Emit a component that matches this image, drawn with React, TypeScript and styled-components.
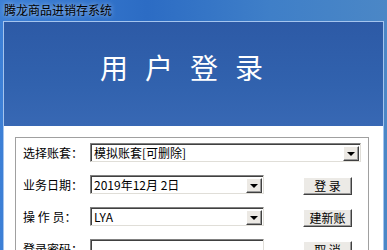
import styled, { createGlobalStyle } from "styled-components";

const GlobalStyle = createGlobalStyle`
  html, body {
    margin: 0;
    padding: 0;
    overflow: hidden;
    background: #fff;
  }
  body {
    font-family: "Noto Sans CJK SC", "Noto Sans", sans-serif;
  }
`;

const Window = styled.div`
  width: 387px;
  height: 250px;
  display: flex;
  flex-direction: column;
  overflow: hidden;
  background: linear-gradient(90deg, #3d80d6 0%, #2c6cc4 38%, #3f7fc8 70%, #4b87c6 100%);
`;

const TitleBar = styled.div`
  height: 21px;
  flex-shrink: 0;
  padding-left: 4px;
  font-size: 12px;
  line-height: 20px;
  color: #000;
  text-shadow: 0 0 5px rgba(255, 255, 255, 0.7);
`;

const Client = styled.div`
  flex: 1;
  margin: 0 3px;
  border: 1px solid #a4c4ee;
  border-bottom: none;
  display: flex;
  flex-direction: column;
  background: #fff;
`;

const Banner = styled.div`
  height: 104px;
  flex-shrink: 0;
  background: linear-gradient(180deg, #2d5aa6 0%, #3162ae 60%, #3868b4 100%);
  padding: 30px 0 0 96px;
  box-sizing: border-box;
`;

const BannerTitle = styled.div`
  font-size: 28px;
  line-height: 30px;
  letter-spacing: 17px;
  color: #fff;
`;

const Body = styled.div`
  flex: 1;
  padding: 11px 0 0 11px;
`;

const GroupBox = styled.div`
  width: 354px;
  height: 200px;
  box-sizing: border-box;
  border: 1px solid #a0a0a0;
  box-shadow: inset 1px 1px 0 #fff;
  padding: 5px 0 0 7px;
  display: flex;
  flex-direction: column;
  gap: 13px;
`;

const Row = styled.div`
  display: flex;
  align-items: center;
  height: 19px;
`;

const Label = styled.div`
  width: 67px;
  font-size: 12px;
  color: #000;
  white-space: pre;
`;

const Field = styled.div<{ $w: number }>`
  width: ${(p) => p.$w}px;
  height: 19px;
  box-sizing: border-box;
  display: flex;
  align-items: center;
  justify-content: space-between;
  border-top: 1px solid #808080;
  border-left: 1px solid #808080;
  border-right: 1px solid #e0ded8;
  border-bottom: 1px solid #e0ded8;
  box-shadow: inset 1px 1px 0 #404040;
  background: #fff;
  padding: 0 1px 0 3px;
`;

const FieldText = styled.span`
  font-size: 12px;
  color: #000;
  line-height: 16px;
  padding-top: 1px;
`;

const DropButton = styled.div`
  width: 16px;
  height: 15px;
  box-sizing: border-box;
  margin-top: 1px;
  background: #ece9e4;
  border-top: 1px solid #fff;
  border-left: 1px solid #fff;
  border-right: 1px solid #404040;
  border-bottom: 1px solid #404040;
  box-shadow: inset -1px -1px 0 #9a9a9a;
  display: flex;
  align-items: center;
  justify-content: center;
  &::after {
    content: "";
    border-left: 4px solid transparent;
    border-right: 4px solid transparent;
    border-top: 4px solid #000;
    margin-top: 1px;
  }
`;

const Button = styled.div`
  width: 49px;
  height: 18px;
  box-sizing: border-box;
  margin: 3px 0 0 39px;
  background: #eceae6;
  border-top: 1px solid #fff;
  border-left: 1px solid #fff;
  border-right: 1px solid #404040;
  border-bottom: 1px solid #404040;
  box-shadow: inset -1px -1px 0 #9a9a9a;
  font-size: 12px;
  line-height: 15px;
  text-align: center;
  color: #000;
  white-space: pre;
`;

export default function App() {
  return (
    <>
      <GlobalStyle />
      <Window>
        <TitleBar>腾龙商品进销存系统</TitleBar>
        <Client>
          <Banner>
            <BannerTitle>用户登录</BannerTitle>
          </Banner>
          <Body>
            <GroupBox>
              <Row>
                <Label>选择账套：</Label>
                <Field $w={271}>
                  <FieldText>模拟账套[可删除]</FieldText>
                  <DropButton />
                </Field>
              </Row>
              <Row>
                <Label>业务日期：</Label>
                <Field $w={174}>
                  <FieldText>2019年12月 2日</FieldText>
                  <DropButton />
                </Field>
                <Button>登 录</Button>
              </Row>
              <Row>
                <Label>{"操 作 员："}</Label>
                <Field $w={174}>
                  <FieldText>LYA</FieldText>
                  <DropButton />
                </Field>
                <Button>建新账</Button>
              </Row>
              <Row>
                <Label>登录密码：</Label>
                <Field $w={174}>
                  <FieldText></FieldText>
                </Field>
                <Button>取 消</Button>
              </Row>
            </GroupBox>
          </Body>
        </Client>
      </Window>
    </>
  );
}
